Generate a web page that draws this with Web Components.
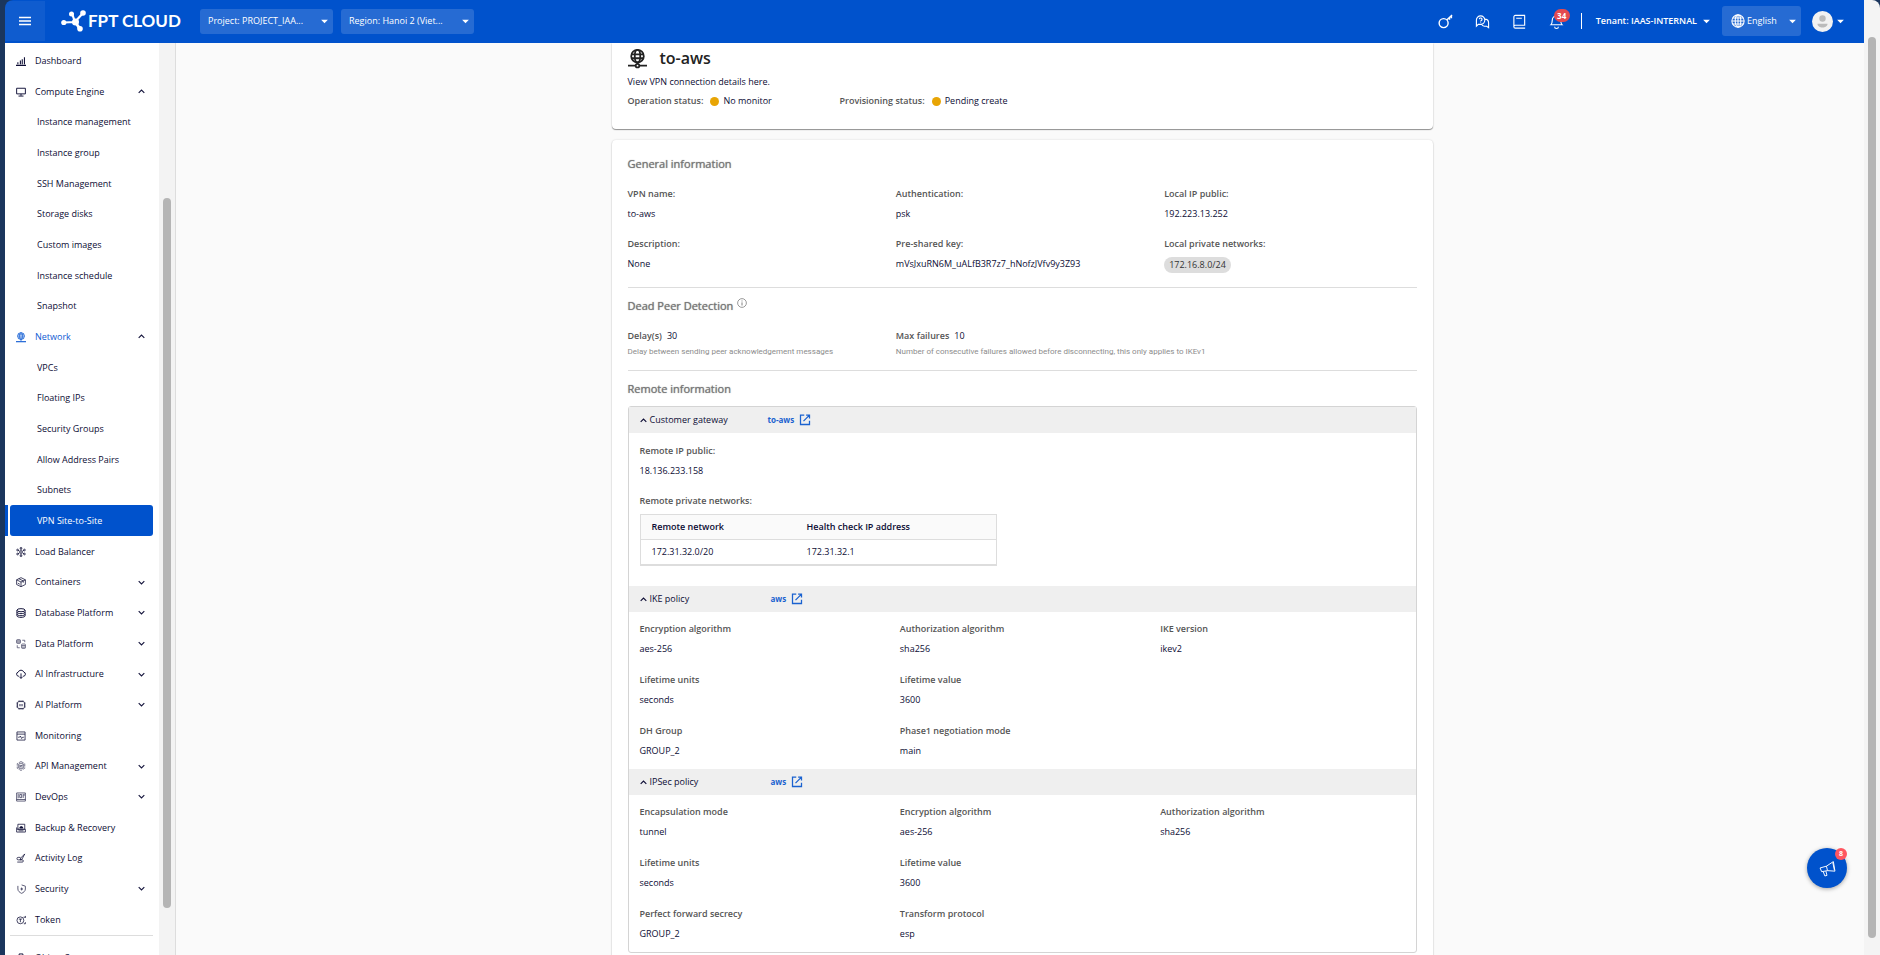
<!DOCTYPE html>
<html lang="en">
<head>
<meta charset="utf-8">
<title>FPT Cloud - VPN Site-to-Site</title>
<style>
html, body { margin: 0; height: 100%; }
body { background: #1b365d; font: 9px/16px "Open Sans", "Noto Sans", sans-serif; color: #0c0c34; overflow: hidden; }
</style>
</head>
<body>
<cloud-app></cloud-app>

<script>
const define = (name, html, setup) => {
  const template = document.createElement('template');
  template.innerHTML = html;
  customElements.define(name, class extends HTMLElement {
    constructor() {
      super();
      this.attachShadow({ mode: 'open' }).append(template.content.cloneNode(true));
    }
    connectedCallback() { if (setup) setup(this, this.shadowRoot); }
  });
};

const ICONS = {
  bars: '<path d="M0 15h16M3 13v-3M7 13V7M10 13V5M13.500 13V2" stroke-width="1.700"/>',
  monitor: '<path d="M1 2h14v9H1zM8 11v3M4 14.500h8" stroke-width="1.500"/>',
  globe: '<circle cx="8" cy="6.500" r="5.500"/><ellipse cx="8" cy="6.500" rx="2.300" ry="5.500"/><path d="M2.500 6.500h11M3.500 3.500h9M3.500 9.500h9M8 12v2.500"/><path d="M0 15.500h16" stroke-width="1.800"/>',
  balancer: '<circle cx="8" cy="8" r="2"/><path d="M8 1v5M8 10v5M2 4.500l4 2.300M10 9.200l4 2.300M14 4.500l-4 2.300M6 9.200l-4 2.300"/><g stroke-width="1"><circle cx="8" cy="2" r="1.500"/><circle cx="8" cy="14" r="1.500"/><circle cx="2.500" cy="4.800" r="1.500"/><circle cx="13.500" cy="4.800" r="1.500"/><circle cx="2.500" cy="11.200" r="1.500"/><circle cx="13.500" cy="11.200" r="1.500"/></g>',
  box: '<path d="M8 1l7 3.500v7.500l-7 3.500-7-3.500V4.500zM1 4.500L8 8l7-3.500M8 8v7.500M4.500 2.700l7 3.500v3M3 10l3 1.500"/>',
  database: '<g stroke-width="1.500"><ellipse cx="8" cy="3.500" rx="6.500" ry="2.500"/><path d="M1.500 3.500v9c0 1.400 3 2.500 6.500 2.500s6.500-1.100 6.500-2.500v-9M1.500 6.500C1.500 8 4.500 9 8 9s6.500-1 6.500-2.500M1.500 9.800c0 1.400 3 2.500 6.500 2.500s6.500-1.100 6.500-2.500"/></g>',
  data: '<g opacity=".75"><rect x="1" y="1" width="6" height="6" rx="1"/><path d="M1 3h6M1 5h6M10 2h4v3M2 10v4h4"/><rect x="9" y="8" width="6" height="7" rx="1"/><path d="M9 10.500h6M9 13h6"/></g>',
  cloud: '<path d="M5 11.500H4A3.300 3.300 0 013.500 5 4.800 4.800 0 0112.500 5a3.300 3.300 0 01-.5 6.500h-1M8 7v8M5.500 12.500L8 15l2.500-2.500" stroke-width="1.500"/>',
  chip: '<rect x="2.500" y="2.500" width="11" height="11" rx="2"/><path d="M6 6.500v3.500M8 6.500v3.500M10 6.500v3.500" stroke-width="1"/><path d="M5 .5v2M8 .5v2M11 .5v2M5 13.500v2M8 13.500v2M11 13.500v2M.5 5h2M.5 8h2M.5 11h2M13.500 5h2M13.500 8h2M13.500 11h2"/>',
  chart: '<path d="M1.500 1.500h13v13h-13zM1.500 5h13M3.500 10h2l1.500-2 2 4 1.500-2h2"/>',
  api: '<g opacity=".7"><path d="M8 .8l6 3.400v7.400l-6 3.600-6-3.600V4.200z" stroke-dasharray="5 1.500"/><circle cx="8" cy="8" r="4.500"/><path d="M4.500 10l7-4M5 7h5M6 9.500h5"/></g>',
  devops: '<g stroke-width="1"><path d="M1 1.500h14v13H1zM1 12h14M3.500 3v7M6 4h3v5H6zM11.500 3.500v6M13 3v3"/></g>',
  backup: '<path d="M3 2h11v8H3zM1 10h14v4.500H1zM1 10V7M4 12.500h8"/><path d="M6 8c0-3 5-3 5 0z" fill="currentColor"/>',
  log: '<path d="M14 1.500L7.500 8l-1 3 3-1zM7 7H3.500a2 2 0 000 4H10a1.500 1.500 0 010 3.500H2" stroke-width="1.200"/>',
  shield: '<g opacity=".7"><path d="M3 3v5c0 3.500 3 5.500 6 7 3-1.500 6-3.500 6-7V3.500L9 1.500M9 6v4" stroke-width="1.500"/><circle cx="9" cy="8" r="1.300" fill="currentColor"/></g>',
  token: '<circle cx="7" cy="8.500" r="5.500"/><path d="M4.500 6.500h5M7 6.500v5M12 3.500h3M15 1.500v3M12.500 14h2.500v-2.500"/>',
  storage: '<path d="M2 4h8l4 3v8H2zM5 4V1.500h6V4" stroke-width="1.500"/>',
  menu: '<path d="M2 4.500h12M2 8h12M2 11.500h12" stroke-width="1.600"/>',
  key: '<circle cx="6" cy="9.700" r="4.800" stroke-width="1.500"/><path d="M9.300 6.400L15 1M12.300 3.700v2.500M14.300 2v2.500" stroke-width="1.500"/>',
  chat: '<path d="M1.500 13V6.500a4.500 4.500 0 119 0A4.500 4.500 0 016 11H3.500zM11 5.500a4 4 0 013.500 4v5l-2-1.500H10a3.500 3.500 0 01-3-2"/><path d="M4.700 5.500a1.400 1.400 0 112 1.400c-.5.300-.7.500-.7 1M6 9v.7"/>',
  book: '<path d="M14 1.500H3.500A1.500 1.500 0 002 3v10.500A1.500 1.500 0 003.500 15H14M13.500 1.500v11M4.500 4.500h6M2 13a1.500 1.500 0 011.500-1H13.500"/>',
  bell: '<path d="M2 11.500h12c-1.500-1.500-1.500-3-1.500-5a4.500 4.500 0 00-9 0c0 2 0 3.500-1.500 5zM6 13.500a2 2 0 004 0M8 2V1" stroke-width="1.200"/>',
  world: '<circle cx="8" cy="8" r="7"/><ellipse cx="8" cy="8" rx="3.200" ry="7"/><path d="M1 8h14M8 1v14M2 4.500h12M2 11.500h12"/>',
  caret: '<path d="M2 5h12l-6 6z" fill="currentColor" stroke="none"/>',
  up: '<path d="M3 10.500l5-5 5 5" stroke-width="2"/>',
  down: '<path d="M3 5.500l5 5 5-5" stroke-width="2"/>',
  info: '<circle cx="8" cy="8" r="7"/><path d="M8 7v5M8 4v1.500" stroke-width="1.500"/>',
  open: '<path d="M7 1.500H2v12.500h12V9M9.500 1.500H14V6M14 1.500L6 9.500" stroke-width="1.700"/>',
  vpn: '<g stroke-width="1.500"><circle cx="8" cy="6" r="5.300"/><ellipse cx="8" cy="6" rx="2.300" ry="5.200"/><path d="M3 4.500h10M3 7.800h10M8 11.200v1.500M0 14h6.300M9.700 14H16"/><circle cx="8" cy="14" r="1.500"/></g>',
  horn: '<path d="M1 7.500L7 5.800 13.500 1.500 15 10.500 8 10l-5.500 1zM7 5.800L8 10M4 11l1.500 4 2-.5L6.500 10.500M13 2.500l1.500 7" stroke-width=".9"/>'
};

/* line icon on a 16-unit grid; name picks the drawing, --size its box */
define('ui-icon', `<style>
:host { display: inline-flex; flex: none; width: var(--size, 12px); height: var(--size, 12px); }
svg { width: 100%; height: 100%; fill: none; stroke: currentColor; stroke-width: 1.2; overflow: visible; }
</style><svg viewBox="0 0 16 16" aria-hidden="true"></svg>`, (el, root) => {
  root.querySelector('svg').innerHTML = ICONS[el.getAttribute('name')];
});

define('brand-logo', `<style>
:host { display: block; }
a { display: flex; align-items: center; gap: 2px; color: #fff; text-decoration: none; font: 700 17px/24px Lato, sans-serif; white-space: nowrap; }
svg { width: 25px; height: 22px; }
</style><a href="#"><svg viewBox="0 0 25 22" stroke="#fff" stroke-width="2.200" fill="#fff" aria-hidden="true">
<path d="M3 12.500L14 12M11 3.500l3 8.500L22 3M14 12l5 8M14 12l5 6" fill="none"/>
<g stroke="none"><circle cx="2.800" cy="12.500" r="2.600"/><circle cx="10.500" cy="4" r="2.500"/><circle cx="22" cy="3" r="2.800"/><circle cx="19" cy="18.800" r="2.800"/><circle cx="14.500" cy="12" r="3.500"/></g>
</svg><span>FPT CLOUD</span></a>`);

define('header-select', `<style>
:host { display: block; }
label { display: flex; align-items: center; position: relative; height: var(--height, 25px); border-radius: 3px; background: rgba(255,255,255,.15); color: #fff; }
select { appearance: none; width: 100%; height: 100%; margin: 0; padding: 0 16px 0 var(--indent, 8px); border: 0; background: none; color: inherit; font: inherit; text-overflow: ellipsis; }
.lead { position: absolute; left: 9px; --size: 14px; }
.caret { position: absolute; right: 4px; --size: 9px; }
:host(:not([icon])) .lead { display: none; }
</style><label><ui-icon class="lead" name="world"></ui-icon><select></select><ui-icon class="caret" name="caret"></ui-icon></label>`, (el, root) => {
  const select = root.querySelector('select');
  select.setAttribute('aria-label', el.getAttribute('label'));
  select.add(new Option(el.getAttribute('value')));
});

define('app-header', `<style>
:host { display: flex; align-items: center; box-sizing: border-box; height: 43px; padding-bottom: 1px; background: #0052cc; color: #fff; border-top-left-radius: 8px; overflow: hidden; }
button { display: inline-flex; align-items: center; justify-content: center; position: relative; margin: 0; padding: 0; border: 0; background: none; color: inherit; font: inherit; cursor: pointer; }
.menu { width: 40px; height: 40px; background: rgba(255,255,255,.06); --size: 16px; }
brand-logo { width: 121px; margin: 0 18px 0 16px; }
.scope { width: 133px; margin-right: 8px; }
.tools { display: flex; gap: 22px; margin-left: auto; padding-right: 17px; --size: 15px; }
.badge { position: absolute; left: 5px; top: -5px; min-width: 16px; border-radius: 7px; background: #e34a4f; font: 700 8px/13px "Open Sans", sans-serif; text-align: center; }
.tenant { gap: 5px; padding-left: 14px; border-left: 1px solid #fff; height: 16px; font-weight: 600; --size: 9px; }
.lang { width: 79px; margin: 0 11px; --height: 30px; --indent: 25px; }
.user { gap: 3px; margin-right: 19px; --size: 9px; }
.face { width: 21px; height: 21px; }
</style>
<button class="menu" aria-label="Menu"><ui-icon name="menu"></ui-icon></button>
<brand-logo></brand-logo>
<header-select class="scope" label="Project" value="Project: PROJECT_IAA..."></header-select>
<header-select class="scope" label="Region" value="Region: Hanoi 2 (Viet..."></header-select>
<div class="tools">
<button aria-label="Keys"><ui-icon name="key"></ui-icon></button>
<button aria-label="Support"><ui-icon name="chat"></ui-icon></button>
<button aria-label="Documents"><ui-icon name="book"></ui-icon></button>
<button aria-label="Notifications"><ui-icon name="bell"></ui-icon><span class="badge">34</span></button>
</div>
<button class="tenant">Tenant: IAAS-INTERNAL <ui-icon name="caret"></ui-icon></button>
<header-select class="lang" icon label="Language" value="English"></header-select>
<button class="user" aria-label="Account"><svg class="face" viewBox="0 0 21 21"><circle cx="10.500" cy="10.500" r="10.500" fill="#f2f2f2"/><circle cx="10.500" cy="7.500" r="3.200" fill="#bbb"/><path d="M5.500 12.800h10c0 5-10 5-10 0z" fill="#bbb"/></svg><ui-icon name="caret"></ui-icon></button>`);

define('scroll-rail', `<style>
:host { display: flex; flex: none; width: 16px; background: #f4f4f4; }
i { flex: 1; margin: var(--start) 4px var(--end); border-radius: 4px; background: #b5b5b5; }
</style><i></i>`);

define('nav-item', `<style>
:host { display: flex; width: 100%; }
a { display: flex; flex: 1; align-items: center; margin: 0 6px 0 5px; padding: 0 7px 0 6px; border-radius: 3px; color: inherit; text-decoration: none; white-space: nowrap; }
.text { flex: 1; margin-left: 9px; }
:host([sub]) .text { margin-left: 21px; }
.lead { --size: 10px; }
:host([tinted]) { color: #0f5bd3; }
.fold { --size: 9px; color: #14143c; }
:host([active]) { background: linear-gradient(#0052cc, #0052cc) 0 0 / 3px 100% no-repeat; }
:host([active]) a { background: #0052cc; color: #fff; }
</style><a href="#"><span class="text"><slot></slot></span></a>`, (el, root) => {
  const link = root.querySelector('a');
  const add = (cls, name, where) => {
    const icon = document.createElement('ui-icon');
    icon.className = cls;
    icon.setAttribute('name', name);
    link[where](icon);
  };
  if (el.hasAttribute('icon')) add('lead', el.getAttribute('icon'), 'prepend');
  if (el.hasAttribute('fold')) add('fold', el.getAttribute('fold'), 'append');
});

define('side-nav', `<style>
:host { display: flex; flex: none; width: 170px; background: #fff; border-right: 1px solid #ddd; overflow: hidden; }
nav { flex: 1; min-width: 0; }
ul { display: grid; grid-auto-rows: 31px 31px 30px; margin: 0; padding: 2px 0 0; list-style: none; }
li { display: flex; }
ul + ul { margin: 0 6px 0 5px; padding: 6px 0 0; border-top: 1px solid #ddd; }
ul + ul nav-item { margin-left: -5px; }
scroll-rail { --start: 155px; --end: 47px; background: #f3f3f3; }
</style><nav aria-label="Services">
<ul>
<li><nav-item icon="bars">Dashboard</nav-item></li>
<li><nav-item icon="monitor" fold="up">Compute Engine</nav-item></li>
<li><nav-item sub>Instance management</nav-item></li>
<li><nav-item sub>Instance group</nav-item></li>
<li><nav-item sub>SSH Management</nav-item></li>
<li><nav-item sub>Storage disks</nav-item></li>
<li><nav-item sub>Custom images</nav-item></li>
<li><nav-item sub>Instance schedule</nav-item></li>
<li><nav-item sub>Snapshot</nav-item></li>
<li><nav-item icon="globe" fold="up" tinted>Network</nav-item></li>
<li><nav-item sub>VPCs</nav-item></li>
<li><nav-item sub>Floating IPs</nav-item></li>
<li><nav-item sub>Security Groups</nav-item></li>
<li><nav-item sub>Allow Address Pairs</nav-item></li>
<li><nav-item sub>Subnets</nav-item></li>
<li><nav-item sub active>VPN Site-to-Site</nav-item></li>
<li><nav-item icon="balancer">Load Balancer</nav-item></li>
<li><nav-item icon="box" fold="down">Containers</nav-item></li>
<li><nav-item icon="database" fold="down">Database Platform</nav-item></li>
<li><nav-item icon="data" fold="down">Data Platform</nav-item></li>
<li><nav-item icon="cloud" fold="down">AI Infrastructure</nav-item></li>
<li><nav-item icon="chip" fold="down">AI Platform</nav-item></li>
<li><nav-item icon="chart">Monitoring</nav-item></li>
<li><nav-item icon="api" fold="down">API Management</nav-item></li>
<li><nav-item icon="devops" fold="down">DevOps</nav-item></li>
<li><nav-item icon="backup">Backup &amp; Recovery</nav-item></li>
<li><nav-item icon="log">Activity Log</nav-item></li>
<li><nav-item icon="shield" fold="down">Security</nav-item></li>
<li><nav-item icon="token">Token</nav-item></li>
</ul>
<ul><li><nav-item icon="storage">Object Storage</nav-item></li></ul>
</nav><scroll-rail></scroll-rail>`);

define('page-card', `<style>
:host { display: block; box-sizing: border-box; padding: 0 16px; background: #fff; border-radius: 4px; box-shadow: 0 1px 1px rgba(0,0,0,.4), 0 0 2px rgba(0,0,0,.15); }
</style><slot></slot>`);

define('info-field', `<style>
:host { display: block; }
dl, dd { margin: 0; }
dt { font-weight: 600; color: #555; }
dd { margin-top: 4px; white-space: nowrap; }
</style><dl><dt></dt><dd><slot></slot></dd></dl>`, (el, root) => {
  root.querySelector('dt').textContent = el.getAttribute('label');
});

define('field-grid', `<style>
:host { display: grid; grid-template-columns: repeat(3, minmax(0, 1fr)); gap: var(--row-gap, 15px) 16px; }
</style><slot></slot>`);

define('status-field', `<style>
:host { display: flex; align-items: center; white-space: nowrap; }
b { font-weight: 600; color: #555; }
i { width: 9px; height: 9px; margin: 0 4px 0 7px; border-radius: 50%; background: #e8a505; }
</style><b></b><i></i><slot></slot>`, (el, root) => {
  root.querySelector('b').textContent = el.getAttribute('label');
});

define('limit-field', `<style>
:host { display: block; }
b { font-weight: 600; color: #555; margin-right: 5px; }
p { margin: 0; color: #8c8c8c; font-family: Roboto, sans-serif; font-size: 8px; white-space: nowrap; }
</style><div><b></b><slot></slot></div><p></p>`, (el, root) => {
  root.querySelector('b').textContent = el.getAttribute('label');
  root.querySelector('p').textContent = el.getAttribute('hint');
});

define('network-chip', `<style>
:host { display: block; width: fit-content; padding: 0 5px; border-radius: 8px; background: #ddd; color: #333; }
</style><slot></slot>`);

define('section-title', `<style>
:host { display: block; }
h2 { display: flex; gap: 4px; margin: 0; font-size: 11px; line-height: 16px; font-weight: 400; color: #777; text-shadow: 0 0 1px #777; --size: 10px; }
</style><h2><slot></slot></h2>`);

define('network-table', `<style>
:host { display: block; width: 357px; }
table { width: 100%; border: 1px solid #ddd; border-bottom-width: 2px; border-spacing: 0; box-sizing: border-box; table-layout: fixed; }
th, td { padding: 4px 11px; text-align: left; }
th { background: #fafafa; border-bottom: 1px solid #ddd; font-weight: 600; }
th:first-child { width: 133px; }
</style><table><thead><tr><th scope="col">Remote network</th><th scope="col">Health check IP address</th></tr></thead>
<tbody><tr><td>172.31.32.0/20</td><td>172.31.32.1</td></tr></tbody></table>`);

define('policy-panel', `<style>
:host { display: block; }
header { display: flex; align-items: center; height: 26px; padding-left: 10px; background: #efefef; }
button { display: flex; flex: none; align-items: center; gap: 2px; width: 129px; margin: 0; padding: 0; border: 0; background: none; color: inherit; font: inherit; cursor: pointer; --size: 9px; }
a { display: flex; align-items: center; gap: 5px; color: #1a62d0; font-size: 8px; font-weight: 700; text-decoration: none; --size: 12px; }
:host([short]) button { width: 132px; }
section { padding: 9px 11px 10px; }
</style><header><button aria-expanded="true"><ui-icon name="up"></ui-icon><span></span></button><a href="#"><span class="link"></span><ui-icon name="open"></ui-icon></a></header>
<section><slot></slot></section>`, (el, root) => {
  root.querySelector('button span').textContent = el.getAttribute('heading');
  root.querySelector('.link').textContent = el.getAttribute('link');
});

define('vpn-details', `<style>
:host { display: block; padding: 0 0 0 4px; }
.column { max-width: 821px; margin: 0 auto; }
.head { height: 86px; padding-top: 5px; border-radius: 0 0 4px 4px; }
h1 { display: flex; align-items: center; gap: 13px; margin: 0; font-size: 16px; line-height: 20px; font-weight: 600; color: #222; --size: 19px; }
.head p { margin: 6px 0 3px; }
.status { display: grid; grid-template-columns: 212px 1fr; }
.body { margin-top: 11px; padding-top: 16px; padding-bottom: 24px; }
.general { margin-top: 14px; --row-gap: 14px; }
.general network-chip, .gateway network-table { margin-top: 5px; }
hr { margin: 14px 0 10px; border: 0; border-top: 1px solid #ddd; }
.limits { margin: 14px 0 0; }
.limits + hr { margin: 10px 0; }
.panels { margin-top: 9px; border: 1px solid #d4d4d4; border-radius: 3px; }
.gateway { display: grid; gap: 14px; padding: 1px 0 10px; }
</style>
<div class="column">
<page-card class="head">
<h1><ui-icon name="vpn"></ui-icon>to-aws</h1>
<p>View VPN connection details here.</p>
<div class="status"><status-field label="Operation status:">No monitor</status-field><status-field label="Provisioning status:">Pending create</status-field></div>
</page-card>
<page-card class="body">
<section-title>General information</section-title>
<field-grid class="general">
<info-field label="VPN name:">to-aws</info-field><info-field label="Authentication:">psk</info-field><info-field label="Local IP public:">192.223.13.252</info-field>
<info-field label="Description:">None</info-field><info-field label="Pre-shared key:">mVsJxuRN6M_uALfB3R7z7_hNofzJVfv9y3Z93</info-field><info-field label="Local private networks:"><network-chip>172.16.8.0/24</network-chip></info-field>
</field-grid>
<hr>
<section-title>Dead Peer Detection <ui-icon name="info"></ui-icon></section-title>
<field-grid class="limits">
<limit-field label="Delay(s)" hint="Delay between sending peer acknowledgement messages">30</limit-field>
<limit-field label="Max failures" hint="Number of consecutive failures allowed before disconnecting, this only applies to IKEv1">10</limit-field>
</field-grid>
<hr>
<section-title>Remote information</section-title>
<div class="panels">
<policy-panel heading="Customer gateway" link="to-aws"><div class="gateway">
<info-field label="Remote IP public:">18.136.233.158</info-field>
<info-field label="Remote private networks:"><network-table></network-table></info-field>
</div></policy-panel>
<policy-panel short heading="IKE policy" link="aws"><field-grid>
<info-field label="Encryption algorithm">aes-256</info-field><info-field label="Authorization algorithm">sha256</info-field><info-field label="IKE version">ikev2</info-field>
<info-field label="Lifetime units">seconds</info-field><info-field label="Lifetime value">3600</info-field><span></span>
<info-field label="DH Group">GROUP_2</info-field><info-field label="Phase1 negotiation mode">main</info-field>
</field-grid></policy-panel>
<policy-panel short heading="IPSec policy" link="aws"><field-grid>
<info-field label="Encapsulation mode">tunnel</info-field><info-field label="Encryption algorithm">aes-256</info-field><info-field label="Authorization algorithm">sha256</info-field>
<info-field label="Lifetime units">seconds</info-field><info-field label="Lifetime value">3600</info-field><span></span>
<info-field label="Perfect forward secrecy">GROUP_2</info-field><info-field label="Transform protocol">esp</info-field>
</field-grid></policy-panel>
</div>
</page-card>
</div>`);

define('news-button', `<style>
:host { display: block; position: absolute; right: 17px; bottom: 67px; }
button { display: grid; place-items: center; width: 40px; height: 40px; padding: 0; border: 0; border-radius: 50%; background: #0052cc; color: #fff; box-shadow: 0 1px 4px rgba(0,0,0,.35); --size: 17px; }
span { position: absolute; right: 0; top: 0; width: 12px; border-radius: 6px; background: #ff5660; font: 700 7px/12px "Open Sans", sans-serif; text-align: center; }
</style><button aria-label="News"><ui-icon name="horn"></ui-icon><span>8</span></button>`);

define('cloud-app', `<style>
:host { display: flex; height: 100vh; padding-left: 5px; box-sizing: border-box; }
.window { display: flex; flex: 1; flex-direction: column; min-width: 0; position: relative; }
.content { display: flex; flex: 1; min-height: 0; }
main { flex: 1; min-width: 0; overflow: hidden; background: #fafafa; }
.page { --start: 37px; --end: 17px; border-top-right-radius: 8px; }
</style>
<div class="window"><app-header></app-header>
<div class="content"><side-nav></side-nav><main><vpn-details></vpn-details></main></div>
<news-button></news-button></div>
<scroll-rail class="page"></scroll-rail>`);
</script>
</body>
</html>
